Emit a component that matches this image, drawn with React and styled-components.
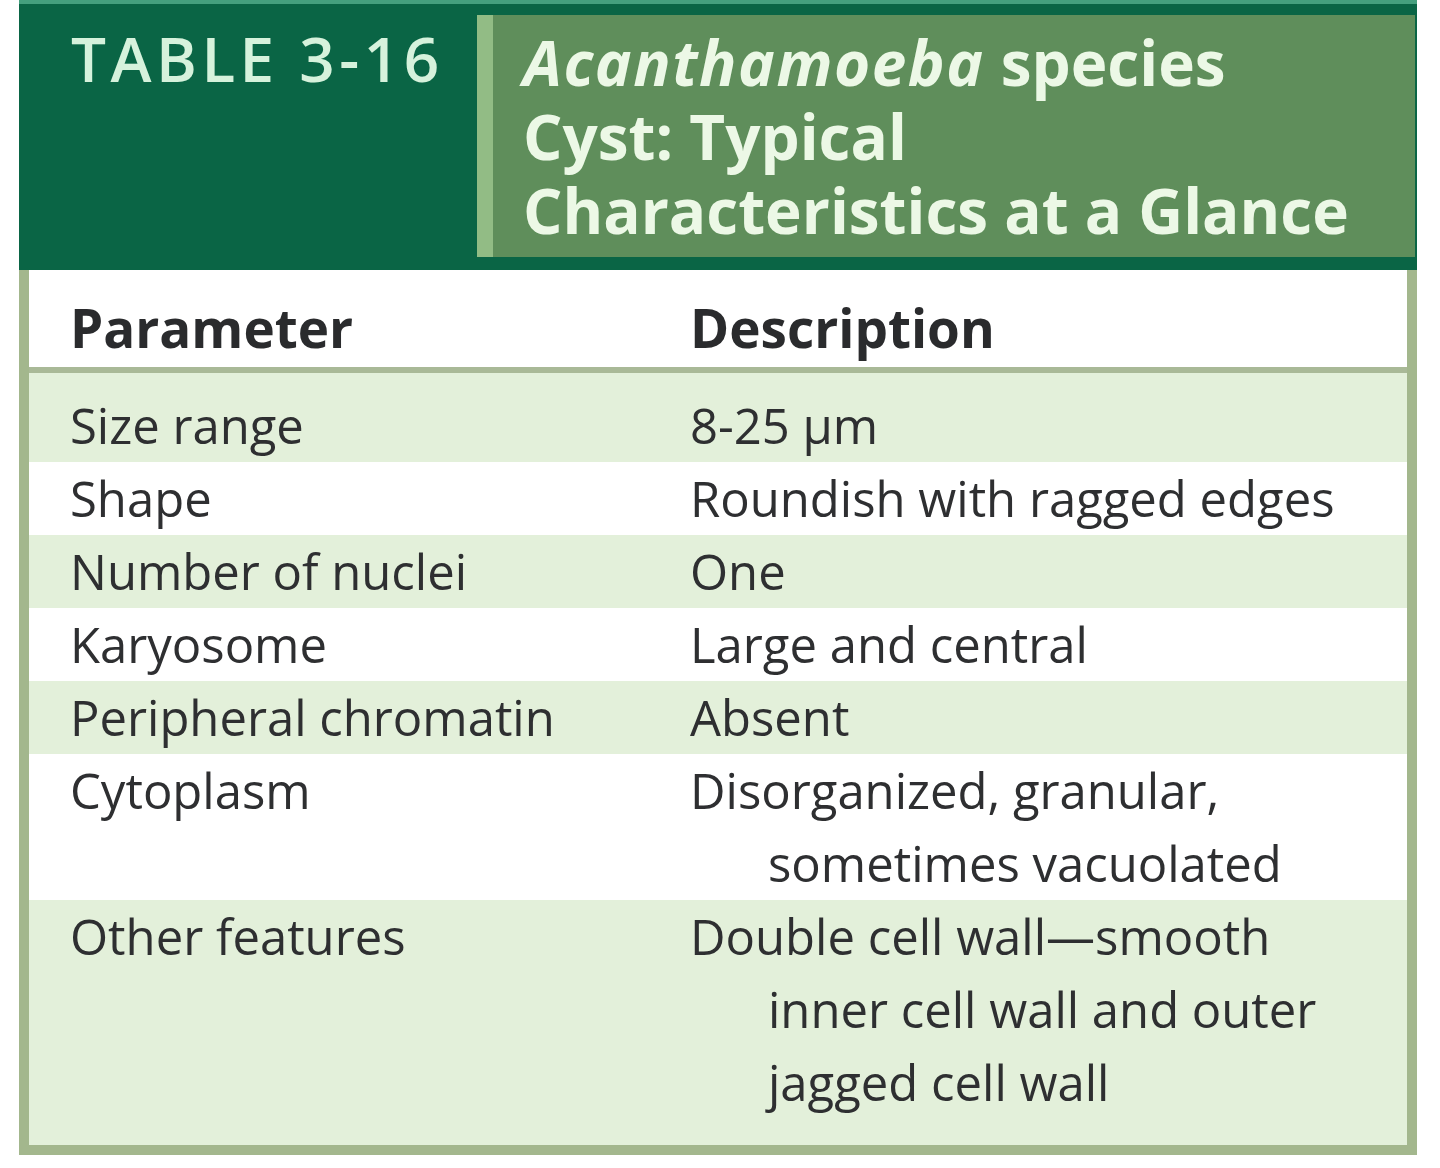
import styled, { createGlobalStyle } from 'styled-components';

const GlobalStyle = createGlobalStyle`
  html, body {
    margin: 0;
    padding: 0;
    background: #ffffff;
  }

  body {
    font-family: "Open Sans", "Noto Sans", "Liberation Sans", sans-serif;
    color: #2e2f31;
  }
`;

const Page = styled.div`
  width: 1440px;
  padding-left: 19px;
  box-sizing: border-box;
`;

const Card = styled.div`
  width: 1398px;
`;

const Header = styled.header`
  display: flex;
  height: 270px;
  box-sizing: border-box;
  background: #0a6545;
  border-top: 4px solid #45a07e;
  padding: 11px 2px 13px 0;
`;

const Label = styled.div`
  width: 458px;
  flex-shrink: 0;
  box-sizing: border-box;
  padding: 6px 0 0 52px;
  font-size: 62px;
  font-weight: 600;
  letter-spacing: 4.5px;
  line-height: 74px;
  color: #d6f2dc;
`;

const TitleBox = styled.div`
  flex: 1;
  background: #5f8e5b;
  border-left: 16px solid #92bc85;
  padding: 10px 0 0 30px;
  font-size: 62px;
  font-weight: 700;
  line-height: 74px;
  color: #ecf8e6;
`;

const TitleLine = styled.div`
  white-space: nowrap;

  em {
    font-style: italic;
    letter-spacing: 1.5px;
  }
`;

const Body = styled.div`
  border: 10px solid #a3b78d;
  border-top: 0;
  background: #ffffff;
`;

const Row = styled.div`
  display: grid;
  grid-template-columns: 620px 1fr;
  padding: ${(p) => p.$padTop || 0}px 0 ${(p) => p.$padBottom || 0}px 41px;
  background: ${(p) => (p.$shade ? '#e3f0da' : '#ffffff')};
  font-size: 49px;
  line-height: 73px;
  white-space: nowrap;
`;

const HeadRow = styled(Row)`
  padding-top: 21px;
  padding-bottom: 3px;
  font-size: 53px;
  font-weight: 700;
  color: #2a2b2d;
  border-bottom: 6px solid #a9b997;
`;

const Line = styled.div`
  padding-left: ${(p) => (p.$indent ? 78 : 0)}px;
`;

const rows = [
  { param: 'Size range', desc: ['8-25 µm'], padTop: 16 },
  { param: 'Shape', desc: ['Roundish with ragged edges'] },
  { param: 'Number of nuclei', desc: ['One'] },
  { param: 'Karyosome', desc: ['Large and central'] },
  { param: 'Peripheral chromatin', desc: ['Absent'] },
  { param: 'Cytoplasm', desc: ['Disorganized, granular,', 'sometimes vacuolated'] },
  {
    param: 'Other features',
    desc: ['Double cell wall—smooth', 'inner cell wall and outer', 'jagged cell wall'],
    padBottom: 26
  }
];

export default function App() {
  return (
    <Page>
      <GlobalStyle />
      <Card>
        <Header>
          <Label>TABLE 3-16</Label>
          <TitleBox>
            <TitleLine>
              <em>Acanthamoeba</em> species
            </TitleLine>
            <TitleLine>Cyst: Typical</TitleLine>
            <TitleLine>Characteristics at a Glance</TitleLine>
          </TitleBox>
        </Header>
        <Body>
          <HeadRow>
            <div>Parameter</div>
            <div>Description</div>
          </HeadRow>
          {rows.map((row, index) => (
            <Row
              key={row.param}
              $shade={index % 2 === 0}
              $padTop={row.padTop}
              $padBottom={row.padBottom}
            >
              <div>{row.param}</div>
              <div>
                {row.desc.map((text, i) => (
                  <Line key={i} $indent={i > 0}>
                    {text}
                  </Line>
                ))}
              </div>
            </Row>
          ))}
        </Body>
      </Card>
    </Page>
  );
}
